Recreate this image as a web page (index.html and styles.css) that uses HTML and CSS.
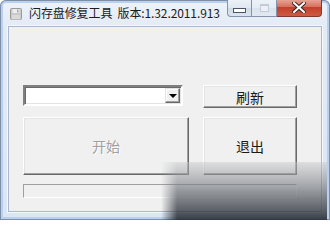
FILE: index.html
```html
<!DOCTYPE html>
<html lang="zh-CN">
<head>
<meta charset="utf-8">
<title>闪存盘修复工具</title>
<link rel="stylesheet" href="styles.css">
</head>
<body>
<div class="window">
  <div class="titlebar">
    <svg class="app-icon" width="12" height="12" viewBox="0 0 12 12">
      <rect x="0.5" y="0.5" width="11" height="11" rx="1" fill="#c9c9c9" stroke="#9a9a9a"/>
      <rect x="2.5" y="1" width="7" height="4" fill="#eeeeee"/>
      <rect x="2" y="7" width="8" height="4.5" fill="#dadada"/>
      <rect x="7" y="1.5" width="1.5" height="3" fill="#a8a8a8"/>
    </svg>
    <span class="title">闪存盘修复工具&nbsp;&nbsp;版本:1.32.2011.913</span>
    <div class="caption">
      <div class="cap cap-min"><span class="min-glyph"></span></div>
      <div class="cap cap-max"><span class="max-glyph"></span></div>
      <div class="cap cap-close">
        <svg width="14" height="11" viewBox="0 0 14 11">
          <path d="M2 1 L12 10 M12 1 L2 10" stroke="#3b2a2a" stroke-width="4" stroke-linecap="square"/>
          <path d="M2 1 L12 10 M12 1 L2 10" stroke="#ffffff" stroke-width="2" stroke-linecap="square"/>
        </svg>
      </div>
    </div>
  </div>
  <div class="client">
    <div class="row row-top">
      <div class="combo">
        <div class="combo-field"></div>
        <div class="combo-btn"><span class="arrow"></span></div>
      </div>
      <div class="btn btn-refresh">刷新</div>
    </div>
    <div class="row row-mid">
      <div class="btn btn-start disabled">开始</div>
      <div class="btn btn-exit">退出</div>
    </div>
    <div class="progress"></div>
  </div>
  <div class="shade"></div>
</div>
</body>
</html>
```

FILE: styles.css
```css
html, body {
  margin: 0;
  padding: 0;
  background: #ffffff;
}

body {
  width: 330px;
  height: 220px;
  overflow: hidden;
  font-family: "Noto Sans CJK SC", "Noto Sans", "DejaVu Sans", sans-serif;
}

.window {
  position: relative;
  width: 330px;
  height: 220px;
  box-sizing: border-box;
  border-radius: 6px 6px 0 0;
  background: linear-gradient(to bottom, #eef3f9 0, #e3ebf5 26px, #dbe6f3 100%);
  box-shadow: inset 0 0 0 1px #7d8ea6, inset 0 0 0 3px #b8d1f0;
  display: flex;
  flex-direction: column;
  overflow: hidden;
}

.titlebar {
  height: 26px;
  display: flex;
  align-items: center;
  padding: 0 8px 0 10px;
  box-sizing: border-box;
}

.app-icon {
  display: block;
  flex: none;
  margin-top: 1px;
}

.title {
  margin-left: 7px;
  font-size: 12px;
  line-height: 14px;
  color: #1c1c1c;
  white-space: nowrap;
  letter-spacing: -0.1px;
}

.caption {
  margin-left: auto;
  align-self: flex-start;
  display: flex;
  height: 18px;
  margin-top: -1px;
}

.cap {
  height: 18px;
  box-sizing: border-box;
  display: flex;
  align-items: center;
  justify-content: center;
  border: 1px solid #8293ab;
  border-top: none;
}

.cap-min {
  width: 25px;
  border-radius: 0 0 0 4px;
  background: linear-gradient(to bottom, #eef3f9 0, #dfe7f1 50%, #cfd9e6 51%, #dbe5f0 100%);
}

.cap-max {
  width: 25px;
  border-left: none;
  background: linear-gradient(to bottom, #eef3f9 0, #e5ecf4 50%, #d9e2ed 51%, #e2e9f2 100%);
}

.cap-close {
  width: 45px;
  border-left: none;
  border-color: #7d3a33;
  border-radius: 0 0 4px 0;
  background: linear-gradient(to bottom, #e9a99c 0, #d7715f 45%, #c3412c 50%, #cf5a42 100%);
}

.min-glyph {
  display: block;
  width: 11px;
  height: 3px;
  margin-top: 5px;
  background: #ffffff;
  border: 1px solid #4a5566;
}

.max-glyph {
  display: block;
  width: 7px;
  height: 5px;
  border: 1px solid #c2cbd7;
  border-top-width: 2px;
  background: #edf1f6;
}

.cap-close svg {
  display: block;
}

.client {
  flex: 1;
  margin: 0 8px 8px 8px;
  box-sizing: border-box;
  background: #f0f0f0;
  border: 1px solid #a9b8cb;
  box-shadow: 0 0 0 1px #f4f8fc;
  padding: 58px 0 0 14px;
  display: flex;
  flex-direction: column;
}

.row {
  display: flex;
  align-items: flex-start;
}

.row-top {
  height: 23px;
}

.row-mid {
  margin-top: 9px;
}

.combo {
  width: 160px;
  height: 21px;
  box-sizing: border-box;
  display: flex;
  background: #ffffff;
  border-style: solid;
  border-width: 2px;
  border-color: #808080 #ffffff #ffffff #808080;
  box-shadow: inset 1px 1px 0 #696969, inset -1px -1px 0 #e3e3e3;
  margin-right: 20px;
}

.combo-field {
  flex: 1;
}

.combo-btn {
  width: 15px;
  margin: 1px 1px 1px 0;
  box-sizing: border-box;
  background: #f0f0f0;
  border-style: solid;
  border-width: 1px;
  border-color: #e3e3e3 #696969 #696969 #e3e3e3;
  box-shadow: inset -1px -1px 0 #a0a0a0, inset 1px 1px 0 #ffffff;
  display: flex;
  align-items: center;
  justify-content: center;
}

.arrow {
  display: block;
  width: 0;
  height: 0;
  border-left: 4px solid transparent;
  border-right: 4px solid transparent;
  border-top: 4px solid #000000;
}

.btn {
  box-sizing: border-box;
  background: #f0f0f0;
  border-style: solid;
  border-width: 1px;
  border-color: #ffffff #696969 #696969 #ffffff;
  box-shadow: inset -1px -1px 0 #a0a0a0, inset 1px 1px 0 #e3e3e3;
  display: flex;
  align-items: center;
  justify-content: center;
  font-size: 14px;
  color: #1a1a1a;
  white-space: nowrap;
}

.btn-refresh {
  width: 94px;
  height: 23px;
  margin-left: 0;
}

.btn-start {
  width: 166px;
  height: 58px;
  margin-right: 14px;
}

.btn-exit {
  width: 94px;
  height: 58px;
}

.btn.disabled {
  color: #a0a0a0;
  text-shadow: 1px 1px 0 #ffffff;
}

.progress {
  margin-top: 9px;
  width: 274px;
  height: 14px;
  box-sizing: border-box;
  border-style: solid;
  border-width: 1px;
  border-color: #a0a0a0 #ffffff #ffffff #a0a0a0;
  background: #f0f0f0;
}

.shade {
  position: absolute;
  left: 161px;
  top: 162px;
  right: 3px;
  bottom: 0;
  background: linear-gradient(to bottom, rgba(200, 201, 204, 0.45) 0, rgba(130, 134, 140, 0.6) 35%, rgba(66, 72, 80, 0.82) 80%, rgba(42, 48, 56, 0.92) 100%);
  -webkit-mask-image: linear-gradient(to right, transparent 0, #000 16px, #000 100%);
  mask-image: linear-gradient(to right, transparent 0, #000 16px, #000 100%);
}
```
